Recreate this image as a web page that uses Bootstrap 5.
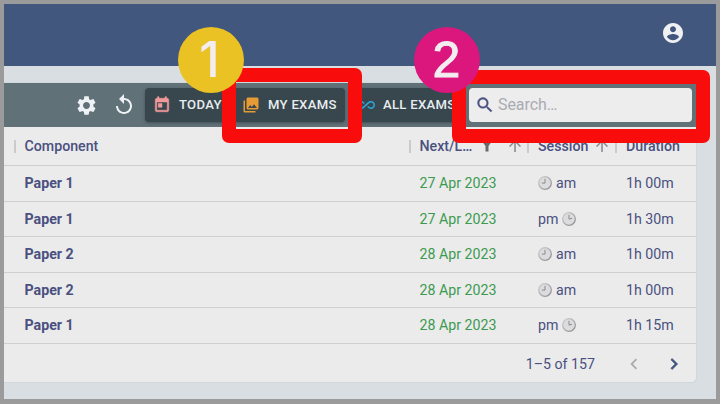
<!DOCTYPE html>
<html lang="en">
<head>
<meta charset="utf-8">
<meta name="viewport" content="width=device-width, initial-scale=1">
<title>Exams</title>
<link href="https://cdn.jsdelivr.net/npm/bootstrap@5.3.0/dist/css/bootstrap.min.css" rel="stylesheet">
<style>
html,body{height:100%}
body{font-family:Roboto,"Liberation Sans",sans-serif;font-size:14.2px;line-height:20px;color:#4a5080;background:#9b9b9b;overflow:hidden}
svg{display:block;flex:none}
.app-frame{height:404px;padding:4px 4px 5px}
.app-page{height:395px;background:#d8dee1}
.topbar{height:62px;background:#42577e;padding:0 31px 5px}
.exam-panel{margin:17px 0 0;width:692px;height:299px;background:#ebebeb;border-bottom-right-radius:4px;box-shadow:0 0 1px #9aa4aa;overflow:hidden}
.toolbar{height:44px;background:#617178;padding:0 4px 0 71px}
.reload-icon{margin-left:14px}
.tool-btn{height:34px;background:#38474e;color:#e8edf0;border:0;border-radius:4px;font-size:13.1px;font-weight:500;letter-spacing:.3px;padding:0 0 0 8px;box-shadow:0 1px 3px #2c3a4199;white-space:nowrap}
.tool-btn:hover{background:#38474e;color:#e8edf0}
.btn-today{width:85px}
.btn-mine{width:111px}
.btn-all{width:113px}
.search-box{width:223px;height:34px;background:#ededed;border-radius:4px;padding:0 6px;margin-left:3px}
.search-box input{font-size:16px;color:#4a5080;letter-spacing:-.08px;line-height:24px;margin-left:3px}
.search-box input::placeholder{color:#a9abb2;opacity:1}
.exam-grid{display:grid;grid-template-columns:395px 118.5px 88px 1fr;padding-left:20.5px;align-items:center;border-bottom:1px solid #cdcfd2;height:35.5px}
.head-line{height:39px;font-weight:500}
.head-line>div{position:relative;height:20px}
.head-line>div::before{content:"";position:absolute;left:-11px;top:4px;width:2px;height:13px;background:#cbcbcc}
.filter-icon{margin-left:9px}
.sort-icon{margin-left:13px}
.sort-near{margin-left:5px}
.paper{font-weight:700}
.when{color:#3c9a50}
.footer-line{height:39px;padding:1px 11px 0 0}
.prev-icon{margin-left:28px}
.next-icon{margin-left:18px}
.ring{position:absolute;border:14px solid #f80d0c;border-radius:7px;pointer-events:none}
.ring-a{left:222px;top:68px;width:140px;height:75px}
.ring-b{left:452px;top:70px;width:258px;height:73px}
.step{position:absolute;width:66px;height:66px;border-radius:50%;color:#f2edf0;line-height:66px;text-align:center}
.step-a{left:178px;top:27px;background:#ebc223;font-family:Inter,sans-serif;font-size:49px;font-weight:500;padding-right:3px}
.step-b{left:413.5px;top:26.5px;background:#db177e;font-family:"Liberation Sans",Arial,sans-serif;font-size:50px;-webkit-text-stroke:1px #f2edf0}
</style>
<script src="https://cdn.jsdelivr.net/npm/bootstrap@5.3.0/dist/js/bootstrap.bundle.min.js"></script>
</head>
<body>
<svg width="0" height="0" class="position-absolute">
<linearGradient id="dial" x1="0" y1="0" x2="1" y2="1"><stop offset="0" stop-color="#d2d2d4"/><stop offset="1" stop-color="#8b8b8f"/></linearGradient>
<symbol id="am" viewBox="0 0 14 14"><circle cx="7" cy="7" r="6.300" fill="#dcdcde" stroke="url(#dial)" stroke-width="1.300"/><path d="M7 2.800v4.300H3.800" fill="none" stroke="#8b8b90" stroke-width="1"/></symbol>
<symbol id="pm" viewBox="0 0 14 14"><circle cx="7" cy="7" r="6.300" fill="#dcdcde" stroke="url(#dial)" stroke-width="1.300"/><path d="M7 2.800v4.300L10 6.300" fill="none" stroke="#8b8b90" stroke-width="1"/></symbol>
<symbol id="up" viewBox="0 0 24 24"><path d="m4 12 1.410 1.410L11 7.830V20h2V7.830l5.580 5.590L20 12l-8-8z"/></symbol>
</svg>
<div class="app-frame">
<div class="app-page">
<nav class="topbar d-flex align-items-center justify-content-end">
<svg width="24" height="24" viewBox="0 0 24 24" fill="#f0f1f3"><path d="M12 2C6.480 2 2 6.480 2 12s4.480 10 10 10 10-4.480 10-10S17.520 2 12 2zm0 3.200c1.660 0 3 1.340 3 3s-1.340 3-3 3-3-1.340-3-3 1.340-3 3-3zm0 14c-2.500 0-4.710-1.280-6-3.220.03-1.990 4-3.080 6-3.080 1.990 0 5.970 1.090 6 3.080-1.290 1.940-3.500 3.220-6 3.220z"/></svg>
</nav>
<main class="exam-panel">
<div class="toolbar d-flex align-items-center">
<svg width="23" height="23" viewBox="0 0 24 24" fill="#eef2f4"><path d="M19.140 12.940c.04-.3.060-.61.060-.94 0-.32-.02-.64-.07-.94l2.030-1.580c.18-.14.230-.41.120-.61l-1.920-3.320c-.12-.22-.37-.29-.59-.22l-2.390.96c-.5-.38-1.030-.7-1.620-.94l-.36-2.540c-.04-.24-.24-.41-.48-.41h-3.840c-.24 0-.43.170-.47.410l-.36 2.540c-.59.240-1.130.57-1.620.94l-2.390-.96c-.22-.08-.47 0-.59.220L2.740 8.870c-.12.210-.08.470.12.610l2.030 1.580c-.05.300-.09.630-.09.940s.02.640.07.940l-2.030 1.580c-.18.140-.23.410-.12.610l1.920 3.320c.12.220.37.290.59.220l2.390-.96c.5.380 1.030.7 1.620.94l.36 2.540c.05.240.24.410.48.410h3.840c.24 0 .44-.17.470-.41l.36-2.540c.59-.24 1.130-.56 1.620-.94l2.390.96c.22.080.47 0 .59-.22l1.920-3.320c.12-.22.070-.47-.12-.61l-2.010-1.580zM12 15.600c-1.980 0-3.600-1.620-3.600-3.600s1.620-3.600 3.600-3.600 3.600 1.620 3.600 3.600-1.620 3.600-3.600 3.600z"/></svg>
<svg class="reload-icon" width="24" height="24" viewBox="0 0 24 24" fill="#eef2f4"><path d="M12 5V1L7 6l5 5V7c3.310 0 6 2.690 6 6s-2.690 6-6 6-6-2.690-6-6H4c0 4.420 3.580 8 8 8s8-3.580 8-8-3.580-8-8-8z"/></svg>
<div class="d-flex ms-auto gap-1">
<button class="tool-btn btn-today btn d-flex align-items-center" type="button"><svg class="me-2" width="18" height="18" viewBox="0 0 24 24" fill="#f2999b"><path d="M19 3h-1V1h-2v2H8V1H6v2H5c-1.110 0-2 .9-2 2v14c0 1.100.89 2 2 2h14c1.100 0 2-.9 2-2V5c0-1.100-.9-2-2-2zm0 16H5V8h14v11zM7 10h5v5H7z" stroke="#f2999b" stroke-width=".7"/></svg>TODAY</button>
<button class="tool-btn btn-mine btn d-flex align-items-center" type="button"><svg class="me-2" width="18" height="18" viewBox="0 0 24 24" fill="#e69b35"><path d="M22 16V4c0-1.100-.9-2-2-2H8c-1.100 0-2 .9-2 2v12c0 1.100.9 2 2 2h12c1.100 0 2-.9 2-2zm-11-4 2.030 2.710L16 11l4 5H8l3-4zM2 6v14c0 1.100.9 2 2 2h14v-2H4V6H2z"/></svg>MY EXAMS</button>
<button class="tool-btn btn-all btn d-flex align-items-center" type="button"><svg class="me-2" width="18" height="18" viewBox="0 0 24 24" fill="#2da7dc"><path d="M18.600 6.620c-1.440 0-2.800.56-3.770 1.530L7.800 14.390c-.64.640-1.490.99-2.400.99-1.870 0-3.390-1.510-3.390-3.380S3.530 8.620 5.400 8.620c.91 0 1.760.35 2.440 1.030l1.130 1 1.510-1.340L9.220 8.200C8.200 7.180 6.840 6.620 5.400 6.620 2.420 6.620 0 9.040 0 12s2.420 5.380 5.400 5.380c1.440 0 2.800-.56 3.770-1.530l7.030-6.240c.64-.64 1.490-.99 2.400-.99 1.870 0 3.390 1.510 3.390 3.380s-1.520 3.380-3.390 3.380c-.9 0-1.760-.35-2.440-1.030l-1.140-1.010-1.510 1.340 1.270 1.120c1.020 1.010 2.370 1.570 3.820 1.570 2.980 0 5.400-2.410 5.400-5.380s-2.420-5.370-5.400-5.370z"/></svg>ALL EXAMS</button>
<label class="search-box d-flex align-items-center"><svg width="20" height="20" viewBox="0 0 24 24" fill="#4a5080"><path stroke="#4a5080" stroke-width=".4" d="M15.500 14h-.79l-.28-.27C15.410 12.590 16 11.110 16 9.500 16 5.910 13.090 3 9.500 3S3 5.910 3 9.500 5.910 16 9.500 16c1.610 0 3.090-.59 4.230-1.570l.27.28v.79l5 4.990L20.490 19l-4.990-5zm-6 0C7.010 14 5 11.990 5 9.500S7.010 5 9.500 5 14 7.010 14 9.500 11.990 14 9.500 14z"/></svg><input class="form-control border-0 bg-transparent shadow-none p-0" type="search" placeholder="Search…" aria-label="Search"></label>
</div>
</div>
<div class="exam-grid head-line">
<div>Component</div>
<div class="d-flex align-items-center">Next/L…<svg class="filter-icon" width="12" height="12" viewBox="0 0 12 12" fill="#67696c"><path d="M.8 1h10.400L7.500 6v5.500h-3V6z"/></svg><svg class="sort-icon" width="18" height="18" fill="#85878b"><use href="#up"/></svg></div>
<div class="d-flex align-items-center">Session<svg class="sort-near" width="18" height="18" fill="#85878b"><use href="#up"/></svg></div>
<div>Duration</div>
</div>
<div class="exam-grid"><div class="paper">Paper 1</div><div class="when">27 Apr 2023</div><div class="d-flex align-items-center gap-1"><svg width="14" height="14"><use href="#am"/></svg>am</div><div>1h 00m</div></div>
<div class="exam-grid"><div class="paper">Paper 1</div><div class="when">27 Apr 2023</div><div class="d-flex align-items-center gap-1">pm<svg width="14" height="14"><use href="#pm"/></svg></div><div>1h 30m</div></div>
<div class="exam-grid"><div class="paper">Paper 2</div><div class="when">28 Apr 2023</div><div class="d-flex align-items-center gap-1"><svg width="14" height="14"><use href="#am"/></svg>am</div><div>1h 00m</div></div>
<div class="exam-grid"><div class="paper">Paper 2</div><div class="when">28 Apr 2023</div><div class="d-flex align-items-center gap-1"><svg width="14" height="14"><use href="#am"/></svg>am</div><div>1h 00m</div></div>
<div class="exam-grid"><div class="paper">Paper 1</div><div class="when">28 Apr 2023</div><div class="d-flex align-items-center gap-1">pm<svg width="14" height="14"><use href="#pm"/></svg></div><div>1h 15m</div></div>
<div class="footer-line d-flex align-items-center justify-content-end"><span>1–5 of 157</span>
<svg class="prev-icon" width="22" height="22" viewBox="0 0 24 24" fill="#a9abae"><path d="M15.410 7.410 14 6l-6 6 6 6 1.410-1.410L10.830 12z"/></svg>
<svg class="next-icon" width="22" height="22" viewBox="0 0 24 24" fill="#42577e" stroke="#42577e" stroke-width=".7"><path d="M10 6 8.590 7.410 13.170 12l-4.580 4.590L10 18l6-6z"/></svg></div>
</main>
</div>
</div>
<div class="ring ring-a"></div><div class="ring ring-b"></div>
<div class="step step-a">1</div><div class="step step-b">2</div>
</body>
</html>
